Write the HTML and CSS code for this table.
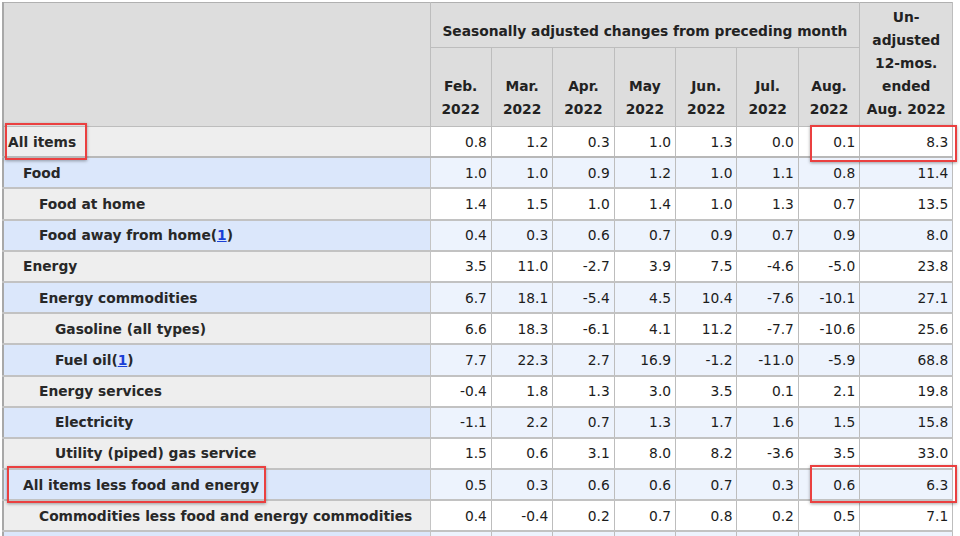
FILE: index.html
```html
<!DOCTYPE html>
<html>
<head>
<meta charset="utf-8">
<link rel="stylesheet" href="styles.css">
</head>
<body>
<div class="wrap">
<table class="cpi">
<colgroup>
<col class="c-stub"><col class="c-m"><col class="c-m"><col class="c-m"><col class="c-m"><col class="c-m"><col class="c-m"><col class="c-m"><col class="c-un">
</colgroup>
<thead>
<tr>
<th class="corner" rowspan="2"></th>
<th class="group" colspan="7">Seasonally adjusted changes from preceding month</th>
<th class="un" rowspan="2">Un-<br>adjusted<br>12-mos.<br>ended<br>Aug. 2022</th>
</tr>
<tr>
<th class="mon">Feb.<br>2022</th>
<th class="mon">Mar.<br>2022</th>
<th class="mon">Apr.<br>2022</th>
<th class="mon">May<br>2022</th>
<th class="mon">Jun.<br>2022</th>
<th class="mon">Jul.<br>2022</th>
<th class="mon">Aug.<br>2022</th>
</tr>
</thead>
<tbody>
<tr class="g top"><th class="l0">All items</th><td>0.8</td><td>1.2</td><td>0.3</td><td>1.0</td><td>1.3</td><td>0.0</td><td>0.1</td><td>8.3</td></tr>
<tr class="b"><th class="l1">Food</th><td>1.0</td><td>1.0</td><td>0.9</td><td>1.2</td><td>1.0</td><td>1.1</td><td>0.8</td><td>11.4</td></tr>
<tr class="g"><th class="l2">Food at home</th><td>1.4</td><td>1.5</td><td>1.0</td><td>1.4</td><td>1.0</td><td>1.3</td><td>0.7</td><td>13.5</td></tr>
<tr class="b"><th class="l2">Food away from home(<a href="#">1</a>)</th><td>0.4</td><td>0.3</td><td>0.6</td><td>0.7</td><td>0.9</td><td>0.7</td><td>0.9</td><td>8.0</td></tr>
<tr class="g"><th class="l1">Energy</th><td>3.5</td><td>11.0</td><td>-2.7</td><td>3.9</td><td>7.5</td><td>-4.6</td><td>-5.0</td><td>23.8</td></tr>
<tr class="b"><th class="l2">Energy commodities</th><td>6.7</td><td>18.1</td><td>-5.4</td><td>4.5</td><td>10.4</td><td>-7.6</td><td>-10.1</td><td>27.1</td></tr>
<tr class="g"><th class="l3">Gasoline (all types)</th><td>6.6</td><td>18.3</td><td>-6.1</td><td>4.1</td><td>11.2</td><td>-7.7</td><td>-10.6</td><td>25.6</td></tr>
<tr class="b"><th class="l3">Fuel oil(<a href="#">1</a>)</th><td>7.7</td><td>22.3</td><td>2.7</td><td>16.9</td><td>-1.2</td><td>-11.0</td><td>-5.9</td><td>68.8</td></tr>
<tr class="g"><th class="l2">Energy services</th><td>-0.4</td><td>1.8</td><td>1.3</td><td>3.0</td><td>3.5</td><td>0.1</td><td>2.1</td><td>19.8</td></tr>
<tr class="b"><th class="l3">Electricity</th><td>-1.1</td><td>2.2</td><td>0.7</td><td>1.3</td><td>1.7</td><td>1.6</td><td>1.5</td><td>15.8</td></tr>
<tr class="g"><th class="l3">Utility (piped) gas service</th><td>1.5</td><td>0.6</td><td>3.1</td><td>8.0</td><td>8.2</td><td>-3.6</td><td>3.5</td><td>33.0</td></tr>
<tr class="b"><th class="l1">All items less food and energy</th><td>0.5</td><td>0.3</td><td>0.6</td><td>0.6</td><td>0.7</td><td>0.3</td><td>0.6</td><td>6.3</td></tr>
<tr class="g"><th class="l2">Commodities less food and energy commodities</th><td>0.4</td><td>-0.4</td><td>0.2</td><td>0.7</td><td>0.8</td><td>0.2</td><td>0.5</td><td>7.1</td></tr>
<tr class="b"><th class="l3"></th><td></td><td></td><td></td><td></td><td></td><td></td><td></td><td></td></tr>
</tbody>
</table>
<div class="mark m1"></div>
<div class="mark m2"></div>
<div class="mark m3"></div>
<div class="mark m4"></div>
</div>
</body>
</html>
```
FILE: styles.css
```css
html, body {
  margin: 0;
  padding: 0;
  background: #ffffff;
  overflow: hidden;
}
body {
  padding: 2px 0 0 2px;
  font-family: "DejaVu Sans", Verdana, sans-serif;
  font-size: 13.8px;
  color: #222222;
}
.wrap {
  position: relative;
  width: 958px;
}
.cpi {
  border-collapse: collapse;
  table-layout: fixed;
  width: 950px;
  border-top: 1px solid #b0b0b0;
  border-left: 2px solid #a8a8a8;
}
.c-stub { width: 427px; }
.c-m { width: 61.4px; }
.c-un { width: 93px; }
thead th {
  background: #dddddd;
  font-weight: bold;
  line-height: 23px;
  padding: 0 4px;
  border: 1px solid #bdbdbd;
  border-top: none;
  color: #222222;
}
thead th.corner {
  border-left: none;
}
thead th.group {
  height: 40px;
  padding: 0 0 4px;
  vertical-align: bottom;
  white-space: nowrap;
}
thead th.un {
  vertical-align: top;
  padding: 3px 2px 5px;
  text-align: center;
}
thead th.mon {
  height: 73px;
  vertical-align: bottom;
  padding: 0 2px 5px;
  text-align: center;
}
tbody th {
  text-align: left;
  font-weight: bold;
  white-space: nowrap;
  height: 29.2px;
  padding: 0 5px;
  border-bottom: 2px solid #c2c2c2;
  border-right: 1px solid #c4c4c4;
  color: #282828;
}
tbody td {
  text-align: right;
  height: 29.2px;
  padding: 0 4px 0 0;
  border-bottom: 2px solid #c2c2c2;
  border-right: 1px solid #bdbdbd;
  white-space: nowrap;
  color: #1c1c1c;
}
tbody tr.top th, tbody tr.top td {
  border-bottom: 2px solid #b8b8b8;
}
tr.g th { background: #eeeeee; }
tr.g td { background: #ffffff; }
tr.b th { background: #dbe7fb; }
tr.b td { background: #edf3fd; }
th.l0 { padding-left: 4px; }
th.l1 { padding-left: 19px; }
th.l2 { padding-left: 35px; }
th.l3 { padding-left: 51px; }
tbody a {
  color: #1a3fd6;
  text-decoration: underline;
}
.mark {
  position: absolute;
  border: 2px solid #ea4040;
  box-shadow: 0 1px 3px rgba(0, 0, 0, 0.35);
  pointer-events: none;
}
.m1 { left: 3px; top: 121px; width: 78px; height: 33px; }
.m2 { left: 808px; top: 123px; width: 143px; height: 33px; }
.m3 { left: 5px; top: 464px; width: 255px; height: 33px; }
.m4 { left: 808px; top: 463px; width: 143px; height: 34px; }
```
